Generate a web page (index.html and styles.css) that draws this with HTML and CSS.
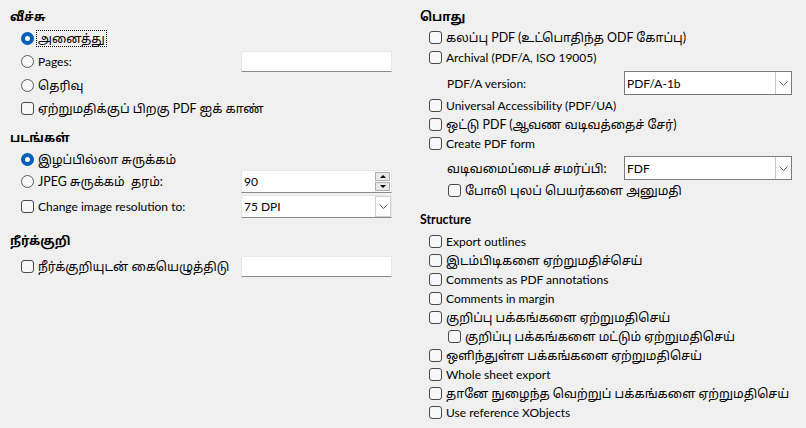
FILE: index.html
```html
<!DOCTYPE html>
<html lang="ta">
<head>
<meta charset="utf-8">
<title>PDF Options</title>
<link rel="stylesheet" href="styles.css">
</head>
<body>
<div class="dialog">
  <div class="col col-left">
    <div class="heading">வீச்சு</div>
    <div class="row h22"><span class="radio on"></span><span class="lbl ta focus">அனைத்து</span></div>
    <div class="row h24"><span class="radio"></span><span class="lbl">Pages:</span><span class="entry"></span></div>
    <div class="row h24"><span class="radio"></span><span class="lbl ta">தெரிவு</span></div>
    <div class="row h23"><span class="check"></span><span class="lbl ta">ஏற்றுமதிக்குப் பிறகு PDF ஐக் காண்</span></div>

    <div class="heading gap8">படங்கள்</div>
    <div class="row h22"><span class="radio on"></span><span class="lbl ta">இழப்பில்லா சுருக்கம்</span></div>
    <div class="row h23"><span class="radio"></span><span class="lbl ta">JPEG சுருக்கம்&nbsp; தரம்:</span>
      <span class="entry spin"><span class="val">90</span>
        <span class="spinbtns"><span class="sb up"></span><span class="sb down"></span></span>
      </span>
    </div>
    <div class="row h27"><span class="check"></span><span class="lbl">Change image resolution to:</span>
      <span class="entry combo"><span class="val">75 DPI</span>
        <span class="dd"><svg width="9" height="5" viewBox="0 0 9 5"><polyline points="0.5,0.5 4.5,4.5 8.5,0.5" fill="none" stroke="#606060" stroke-width="1"/></svg></span>
      </span>
    </div>

    <div class="heading gap11">நீர்க்குறி</div>
    <div class="row h24 mt3"><span class="check"></span><span class="lbl ta">நீர்க்குறியுடன் கையெழுத்திடு</span><span class="entry"></span></div>
  </div>

  <div class="col col-right">
    <div class="heading">பொது</div>
    <div class="row h20"><span class="check"></span><span class="lbl ta">கலப்பு PDF (உட்பொதிந்த ODF கோப்பு)</span></div>
    <div class="row h20"><span class="check"></span><span class="lbl">Archival (PDF/A, ISO 19005)</span></div>
    <div class="row h24 mt4 sub"><span class="lbl">PDF/A version:</span>
      <span class="box w168"><span class="val">PDF/A-1b</span>
        <span class="dd"><svg width="9" height="5" viewBox="0 0 9 5"><polyline points="0.5,0.5 4.5,4.5 8.5,0.5" fill="none" stroke="#606060" stroke-width="1"/></svg></span>
      </span>
    </div>
    <div class="row h20"><span class="check"></span><span class="lbl">Universal Accessibility (PDF/UA)</span></div>
    <div class="row h19"><span class="check"></span><span class="lbl ta">ஒட்டு PDF (ஆவண வடிவத்தைச் சேர்)</span></div>
    <div class="row h19"><span class="check"></span><span class="lbl">Create PDF form</span></div>
    <div class="row h24 mt3 sub"><span class="lbl ta">வடிவமைப்பைச் சமர்ப்பி:</span>
      <span class="box w168"><span class="val">FDF</span>
        <span class="dd"><svg width="9" height="5" viewBox="0 0 9 5"><polyline points="0.5,0.5 4.5,4.5 8.5,0.5" fill="none" stroke="#606060" stroke-width="1"/></svg></span>
      </span>
    </div>
    <div class="row h20 ind"><span class="check"></span><span class="lbl ta">போலி புலப் பெயர்களை அனுமதி</span></div>

    <div class="heading gap10">Structure</div>
    <div class="list">
      <div class="row h19"><span class="check"></span><span class="lbl">Export outlines</span></div>
      <div class="row h19"><span class="check"></span><span class="lbl ta">இடம்பிடிகளை ஏற்றுமதிச்செய்</span></div>
      <div class="row h19"><span class="check"></span><span class="lbl">Comments as PDF annotations</span></div>
      <div class="row h19"><span class="check"></span><span class="lbl">Comments in margin</span></div>
      <div class="row h19"><span class="check"></span><span class="lbl ta">குறிப்பு பக்கங்களை ஏற்றுமதிசெய்</span></div>
      <div class="row h19 ind"><span class="check"></span><span class="lbl ta">குறிப்பு பக்கங்களை மட்டும் ஏற்றுமதிசெய்</span></div>
      <div class="row h19"><span class="check"></span><span class="lbl ta">ஒளிந்துள்ள பக்கங்களை ஏற்றுமதிசெய்</span></div>
      <div class="row h19"><span class="check"></span><span class="lbl">Whole sheet export</span></div>
      <div class="row h19"><span class="check"></span><span class="lbl ta">தானே நுழைந்த வெற்றுப் பக்கங்களை ஏற்றுமதிசெய்</span></div>
      <div class="row h19"><span class="check"></span><span class="lbl">Use reference XObjects</span></div>
    </div>
  </div>
</div>
</body>
</html>
```

FILE: styles.css
```css
html, body {
  margin: 0;
  padding: 0;
  background: #f0f0f0;
}
body {
  width: 806px;
  height: 428px;
  overflow: hidden;
  font-family: "Lato", "Noto Sans Tamil", "Lohit Tamil", "Latha", "Nirmala UI", sans-serif;
  font-size: 12px;
  color: #000;
}
.dialog {
  display: grid;
  grid-template-columns: 410px 396px;
}
.col-left {
  padding: 7px 18px 0 10px;
}
.col-right {
  padding: 7px 14px 0 10px;
}
.heading {
  height: 20px;
  line-height: 20px;
  font-weight: bold;
  font-size: 12.3px;
}
.gap8 { margin-top: 8px; }
.gap10 { margin-top: 10px; }
.gap11 { margin-top: 11px; }
.list { margin-top: 2px; }

.row {
  display: flex;
  align-items: center;
  padding-left: 11px;
}
.col-right .row { padding-left: 9px; }
.col-right .row.ind { padding-left: 28px; }
.col-right .row.sub { padding-left: 27px; }
.h19 { height: 19px; }
.h20 { height: 20px; }
.h22 { height: 22px; }
.h23 { height: 23px; }
.h24 { height: 24px; }
.h27 { height: 27px; }
.mt3 { margin-top: 3px; }
.mt4 { margin-top: 4px; }

.lbl {
  white-space: nowrap;
  line-height: 15px;
}
.lbl.ta {
  font-size: 12.4px;
}
.focus {
  outline: 1px dotted #000;
  outline-offset: 0;
  padding: 0 1px;
  margin-left: -1px;
}

.radio {
  box-sizing: border-box;
  width: 13px;
  height: 13px;
  border: 1px solid #5a5a5a;
  border-radius: 50%;
  background: #f7f7f7;
  margin-right: 4px;
  flex: none;
}
.radio.on {
  border: 4px solid #005fb8;
  background: #fff;
}
.check {
  box-sizing: border-box;
  width: 13px;
  height: 13px;
  border: 1px solid #4a4a4a;
  border-radius: 3px;
  background: #f8f8f8;
  margin-right: 4px;
  flex: none;
}

.entry {
  box-sizing: border-box;
  margin-left: auto;
  width: 151px;
  height: 21px;
  background: #fff;
  border: 1px solid #e6e6e6;
  border-bottom-color: #8a8a8a;
  display: flex;
  align-items: center;
}
.entry.spin, .entry.combo {
  height: 23px;
}
.val {
  padding-left: 2px;
  flex: 1;
}
.spinbtns {
  display: flex;
  flex-direction: column;
  gap: 1px;
  margin-right: 1px;
}
.sb {
  box-sizing: border-box;
  width: 15px;
  height: 9px;
  border: 1px solid #adadad;
  background: #e9e9e9;
  display: flex;
  align-items: center;
  justify-content: center;
}
.sb::before {
  content: "";
  border-left: 3px solid transparent;
  border-right: 3px solid transparent;
}
.sb.up::before { border-bottom: 3px solid #000; }
.sb.down::before { border-top: 3px solid #000; }

.dd {
  box-sizing: border-box;
  width: 16px;
  height: 21px;
  border: 1px solid #d0d0d0;
  background: #fff;
  display: flex;
  align-items: center;
  justify-content: center;
}

.box {
  box-sizing: border-box;
  margin-left: auto;
  height: 24px;
  background: #fff;
  border: 1px solid #7a7a7a;
  display: flex;
  align-items: center;
}
.w168 { width: 168px; }
.box .dd {
  height: 22px;
  border-color: #c8c8c8;
  border-right: none;
  border-top: none;
  border-bottom: none;
}
```
